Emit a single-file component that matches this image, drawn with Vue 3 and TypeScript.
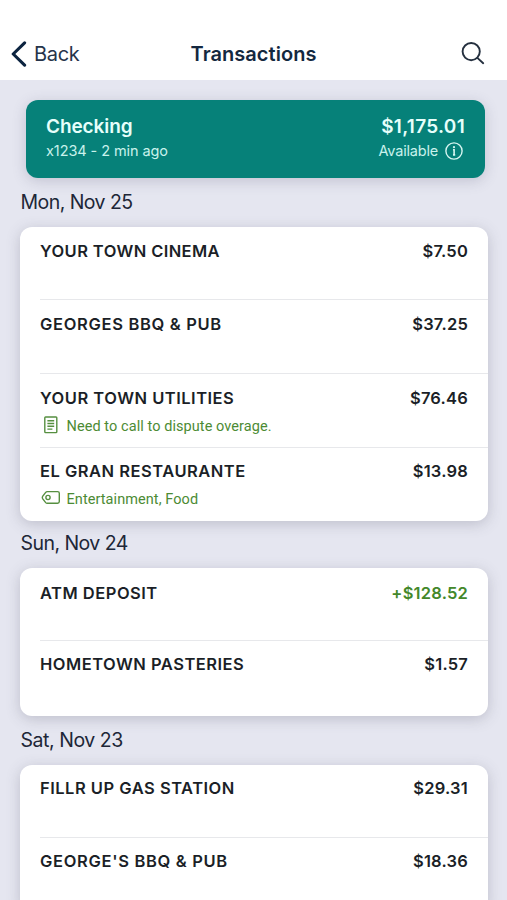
<script setup lang="ts">
interface Transaction {
  name: string
  amount: string
  credit?: boolean
  note?: string
  tags?: string
}

interface DayGroup {
  id: string
  label: string
  items: Transaction[]
}

const groups: DayGroup[] = [
  {
    id: 'mon',
    label: 'Mon, Nov 25',
    items: [
      { name: 'YOUR TOWN CINEMA', amount: '$7.50' },
      { name: 'GEORGES BBQ & PUB', amount: '$37.25' },
      { name: 'YOUR TOWN UTILITIES', amount: '$76.46', note: 'Need to call to dispute overage.' },
      { name: 'EL GRAN RESTAURANTE', amount: '$13.98', tags: 'Entertainment, Food' },
    ],
  },
  {
    id: 'sun',
    label: 'Sun, Nov 24',
    items: [
      { name: 'ATM DEPOSIT', amount: '+$128.52', credit: true },
      { name: 'HOMETOWN PASTERIES', amount: '$1.57' },
    ],
  },
  {
    id: 'sat',
    label: 'Sat, Nov 23',
    items: [
      { name: 'FILLR UP GAS STATION', amount: '$29.31' },
      { name: "GEORGE'S BBQ & PUB", amount: '$18.36' },
    ],
  },
]
</script>

<template>
  <div class="screen">
    <header class="navbar">
      <button class="back" type="button">
        <svg class="chevron" viewBox="0 0 16 26" aria-hidden="true">
          <path d="M13.6 1.8 2.2 13 13.6 24.2" />
        </svg>
        <span>Back</span>
      </button>
      <h1 class="title">Transactions</h1>
      <button class="search" type="button" aria-label="Search">
        <svg viewBox="0 0 24 24" aria-hidden="true">
          <circle cx="10.2" cy="9.6" r="8.6" />
          <path d="M16.4 15.9 22.2 21.2" />
        </svg>
      </button>
    </header>

    <main class="content">
      <section class="account">
        <div class="account-side">
          <span class="account-name">Checking</span>
          <span class="account-meta">x1234 - 2 min ago</span>
        </div>
        <div class="account-side right">
          <span class="account-balance">$1,175.01</span>
          <span class="account-available">
            <span>Available</span>
            <svg class="info" viewBox="0 0 18 18" aria-hidden="true">
              <circle cx="9" cy="9" r="8.1" />
              <path class="stem" d="M8 7.7H9.1V12.9M8 12.9H10.2" />
              <circle class="dot" cx="9" cy="5.2" r="1.1" />
            </svg>
          </span>
        </div>
      </section>

      <section v-for="group in groups" :key="group.id" :class="['day', group.id]">
        <h2 class="day-label">{{ group.label }}</h2>
        <ul class="card">
          <li v-for="item in group.items" :key="item.name" class="row">
            <div class="row-main">
              <span :class="['name', { spaced: item.name.includes('&') }]">{{ item.name }}</span>
              <span :class="['amount', { credit: item.credit }]">{{ item.amount }}</span>
            </div>
            <div v-if="item.note" class="extra">
              <svg class="extra-icon" viewBox="0 0 20 18" aria-hidden="true">
                <rect x="4.8" y="1" width="12" height="15.6" rx="0.8" />
                <path d="M7.4 4.7H14.2M7.4 7.5H14.2M7.4 10.3H14.2M7.4 13.1H12.4" />
              </svg>
              <span class="note-text">{{ item.note }}</span>
            </div>
            <div v-if="item.tags" class="extra">
              <svg class="extra-icon" viewBox="0 0 20 18" aria-hidden="true">
                <path d="M7.2 2.6H17.6Q19.3 2.6 19.3 4.3V12.6Q19.3 14.3 17.6 14.3H7.2Q6.3 14.3 5.7 13.6L2.6 9.6Q2 8.5 2.6 7.4L5.7 3.4Q6.3 2.6 7.2 2.6Z" />
                <circle cx="8" cy="8.5" r="2.1" />
              </svg>
              <span class="tag-text">{{ item.tags }}</span>
            </div>
          </li>
        </ul>
      </section>
    </main>
  </div>
</template>

<style>
body {
  margin: 0;
  background: #e5e6f0;
  overflow: hidden;
}
</style>

<style scoped>
.screen {
  box-sizing: border-box;
  height: 900px;
  overflow: hidden;
  background: #e5e6f0;
  font-family: Inter, "Liberation Sans", sans-serif;
  color: #1b1f27;
}

.navbar {
  box-sizing: border-box;
  height: 80px;
  padding: 27px 22px 0 11px;
  display: grid;
  grid-template-columns: 120px 1fr 109px;
  align-items: center;
  background: #fff;
}

button {
  border: 0;
  padding: 0;
  margin: 0;
  background: none;
  font: inherit;
  color: inherit;
}

.back {
  display: flex;
  align-items: center;
  gap: 7px;
  font-size: 20px;
  line-height: 26px;
  letter-spacing: -0.3px;
  color: #26344a;
}

.chevron {
  width: 16px;
  height: 26px;
  fill: none;
  stroke: #0c2440;
  stroke-width: 3.1;
  stroke-linecap: round;
  stroke-linejoin: round;
}

.title {
  margin: 0;
  text-align: center;
  font-size: 20px;
  line-height: 26px;
  font-weight: 600;
  letter-spacing: 0.05px;
  color: #14283f;
  white-space: nowrap;
}

.search {
  justify-self: end;
  display: flex;
}

.search svg {
  width: 24px;
  height: 24px;
  fill: none;
  stroke: #25303f;
  stroke-width: 1.9;
  stroke-linecap: round;
}

.content {
  padding: 19.5px 19.5px 0 20px;
}

.account {
  box-sizing: border-box;
  height: 78.5px;
  margin: 0 2.5px 0 6px;
  padding: 14px 20px 0 20px;
  display: flex;
  justify-content: space-between;
  border-radius: 12px;
  background: #068179;
  box-shadow: 0 3px 14px rgba(75, 75, 105, 0.22);
  color: #e6fffb;
}

.account-side {
  display: flex;
  flex-direction: column;
}

.right {
  align-items: flex-end;
}

.account-name,
.account-balance {
  font-size: 19px;
  line-height: 25px;
  font-weight: 600;
}

.account-name {
  letter-spacing: -0.1px;
}

.account-balance {
  letter-spacing: 0.3px;
}

.account-meta,
.account-available {
  font-size: 14.5px;
  line-height: 24px;
  letter-spacing: -0.08px;
  color: #c9f2ec;
}

.account-available {
  display: flex;
  align-items: center;
  gap: 7px;
  letter-spacing: -0.2px;
}

.info {
  width: 18px;
  height: 18px;
  margin-right: 2px;
  fill: none;
  stroke: #d5f5f0;
  stroke-width: 1.4;
}

.info .stem {
  stroke-width: 1.6;
}

.info .dot {
  fill: #d5f5f0;
  stroke: none;
}

.day-label {
  margin: 0;
  box-sizing: border-box;
  height: 49px;
  padding: 11px 0 0 0.5px;
  font-size: 19.5px;
  line-height: 26px;
  font-weight: 400;
  letter-spacing: -0.55px;
  color: #202637;
}

.sun .day-label {
  height: 47px;
  padding-top: 9px;
}

.sat .day-label {
  height: 49px;
  padding-top: 11px;
  letter-spacing: -0.45px;
}

.card {
  list-style: none;
  margin: 0;
  padding: 0;
  border-radius: 12px;
  background: #fff;
  box-shadow: 0 3px 14px rgba(75, 75, 95, 0.25);
}

.row {
  position: relative;
  box-sizing: border-box;
  height: 74px;
  padding: 14px 19.5px 0 20px;
}

.row + .row::before {
  content: "";
  position: absolute;
  top: -1px;
  left: 20px;
  right: 0;
  height: 1px;
  background: #e7e8eb;
}

.mon .row:first-child {
  height: 73px;
  padding-top: 13.5px;
}

.mon .row:last-child {
  height: 73px;
  padding-top: 13px;
}

.sun .row:first-child {
  height: 73px;
  padding-top: 15px;
}

.sun .row:last-child {
  height: 75px;
  padding-top: 13px;
}

.sat .row {
  height: 73px;
  padding-top: 13px;
}

.row-main {
  display: flex;
  justify-content: space-between;
  font-size: 16.5px;
  line-height: 20px;
  font-weight: 600;
}

.name {
  letter-spacing: 0.5px;
}

.mon .row:first-child .name {
  letter-spacing: 0.4px;
}

.name.spaced {
  letter-spacing: 0.67px;
}

.amount {
  letter-spacing: 0.2px;
}

.credit {
  color: #43882a;
}

.extra {
  display: flex;
  align-items: center;
  gap: 6.5px;
  margin-top: 9px;
  font-family: Roboto, "Liberation Sans", sans-serif;
  font-size: 14.5px;
  line-height: 20px;
  letter-spacing: 0.07px;
  color: #4c8b34;
}

.extra-icon {
  width: 20px;
  height: 18px;
  margin-top: -5px;
  fill: none;
  stroke: #568f40;
  stroke-width: 1.4;
}
</style>
